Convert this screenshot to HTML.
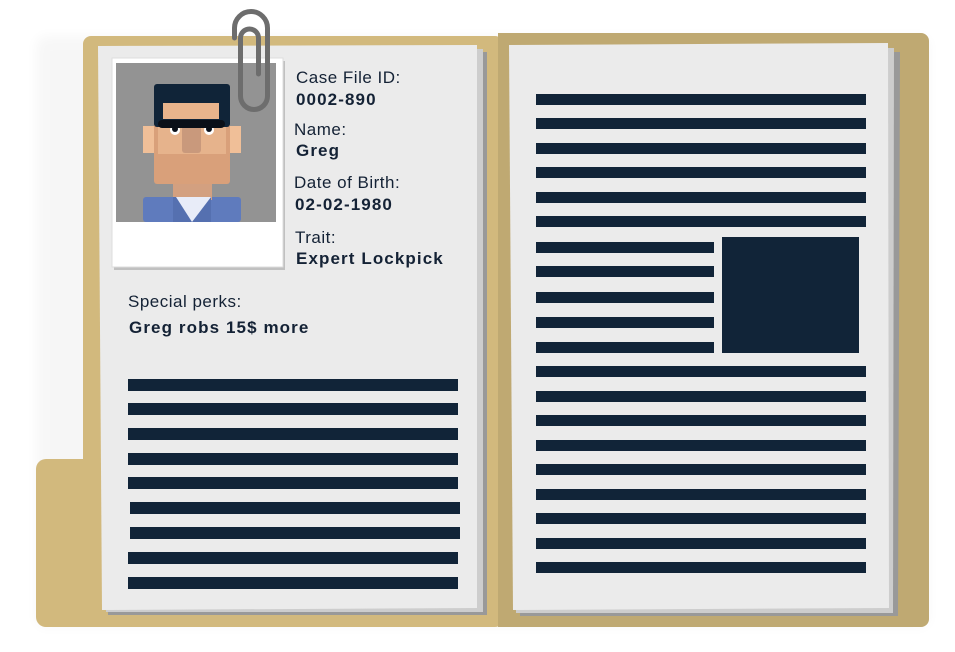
<!DOCTYPE html>
<html><head><meta charset="utf-8"><style>
html,body{margin:0;padding:0;background:#fff;width:955px;height:652px;overflow:hidden}
svg{display:block}
text{font-family:"Liberation Sans",sans-serif;fill:#142235;letter-spacing:0.5px}
.b{font-weight:bold;letter-spacing:1.1px}
</style></head><body>
<svg width="955" height="652" viewBox="0 0 955 652">
<defs>
<filter id="sh" x="-10%" y="-10%" width="120%" height="120%"><feGaussianBlur stdDeviation="6"/></filter>
</defs>
<rect x="36" y="36" width="893" height="591" rx="10" fill="#000" opacity="0.03" filter="url(#sh)"/>
<!-- folder left -->
<rect x="83" y="36" width="420" height="591" rx="8" fill="#d2b97d"/>
<rect x="36" y="459" width="100" height="168" rx="10" fill="#d2b97d"/>
<!-- folder right -->
<rect x="498" y="33" width="431" height="594" rx="8" fill="#bfa972"/>
<rect x="498" y="33" width="20" height="594" fill="#bfa972"/>
<!-- left paper stack -->
<polygon points="106,52 487,52 487,615 108,615" fill="#999"/>
<polygon points="104,49 483,49 483,612 106,612" fill="#cdcdcd"/>
<polygon points="98,46 477,45 477,608 102,610" fill="#ebebeb"/>
<!-- right paper stack -->
<polygon points="518,52 900,52 898,616 520,616" fill="#999"/>
<polygon points="514,49 894,48 893,613 516,613" fill="#cdcdcd"/>
<polygon points="509,45 888,43 889,608 513,610" fill="#ebebeb"/>
<!-- left lines -->
<g fill="#112438">
<rect x="128" y="379" width="330" height="12"/>
<rect x="128" y="403" width="330" height="12"/>
<rect x="128" y="428" width="330" height="12"/>
<rect x="128" y="453" width="330" height="12"/>
<rect x="128" y="477" width="330" height="12"/>
<rect x="130" y="502" width="330" height="12"/>
<rect x="130" y="527" width="330" height="12"/>
<rect x="128" y="552" width="330" height="12"/>
<rect x="128" y="577" width="330" height="12"/>
</g>
<!-- right lines -->
<g fill="#112438">
<rect x="536" y="94" width="330" height="11"/>
<rect x="536" y="118" width="330" height="11"/>
<rect x="536" y="143" width="330" height="11"/>
<rect x="536" y="167" width="330" height="11"/>
<rect x="536" y="192" width="330" height="11"/>
<rect x="536" y="216" width="330" height="11"/>
<rect x="536" y="242" width="178" height="11"/>
<rect x="536" y="266" width="178" height="11"/>
<rect x="536" y="292" width="178" height="11"/>
<rect x="536" y="317" width="178" height="11"/>
<rect x="536" y="342" width="178" height="11"/>
<rect x="722" y="237" width="137" height="116"/>
<rect x="536" y="366" width="330" height="11"/>
<rect x="536" y="391" width="330" height="11"/>
<rect x="536" y="415" width="330" height="11"/>
<rect x="536" y="440" width="330" height="11"/>
<rect x="536" y="464" width="330" height="11"/>
<rect x="536" y="489" width="330" height="11"/>
<rect x="536" y="513" width="330" height="11"/>
<rect x="536" y="538" width="330" height="11"/>
<rect x="536" y="562" width="330" height="11"/>
</g>
<!-- polaroid -->
<rect x="114" y="61" width="171" height="209" fill="#000" opacity="0.18"/>
<rect x="112" y="58" width="171" height="209" fill="#fff" stroke="#ddd" stroke-width="1"/>
<rect x="116" y="63" width="160" height="159" fill="#939393"/>
<!-- face -->
<rect x="143" y="197" width="98" height="25" rx="3" fill="#5f7bbd"/>
<rect x="173" y="178" width="39" height="22" fill="#d3a080"/>
<rect x="173" y="197" width="38" height="25" fill="#5570b0"/>
<polygon points="176,197 211,197 192,222" fill="#e8ecf8"/>
<rect x="143" y="126" width="11" height="27" fill="#f0bf98"/>
<rect x="230" y="126" width="11" height="27" fill="#f0bf98"/>
<rect x="154" y="120" width="76" height="64" rx="3" fill="#d9a07a"/>
<rect x="158" y="120" width="68" height="34" fill="#e6b38c"/>
<rect x="154" y="84" width="76" height="43" rx="3" fill="#102438"/>
<rect x="163" y="103" width="56" height="16" fill="#e8b48c"/>
<rect x="182" y="126" width="19" height="27" rx="3" fill="#c9997c"/>
<circle cx="175" cy="130" r="5" fill="#fff"/><circle cx="175" cy="129" r="3" fill="#0a0f18"/>
<circle cx="209" cy="130" r="5" fill="#fff"/><circle cx="209" cy="129" r="3" fill="#0a0f18"/>
<rect x="158" y="120" width="67" height="8" rx="4" fill="#0a0f18"/>
<!-- paperclip -->
<path d="M234.5,38 L234.5,28 A16.5,16.5 0 0 1 267.5,28 L267.5,96 A13.5,13.5 0 0 1 240.5,96 L240.5,38 A9,9 0 0 1 258.5,38 L258.5,74" fill="none" stroke="#6d6d6d" stroke-width="5" stroke-linecap="round"/>
<!-- text -->
<text x="296" y="83" font-size="17">Case File ID:</text>
<text x="296" y="105" font-size="17" class="b">0002-890</text>
<text x="294" y="135" font-size="17">Name:</text>
<text x="296" y="156" font-size="17" class="b">Greg</text>
<text x="294" y="188" font-size="17">Date of Birth:</text>
<text x="295" y="210" font-size="17" class="b">02-02-1980</text>
<text x="295" y="243" font-size="17">Trait:</text>
<text x="296" y="264" font-size="17" class="b">Expert Lockpick</text>
<text x="128" y="307" font-size="17">Special perks:</text>
<text x="129" y="333" font-size="17" class="b">Greg robs 15$ more</text>
</svg>
</body></html>
